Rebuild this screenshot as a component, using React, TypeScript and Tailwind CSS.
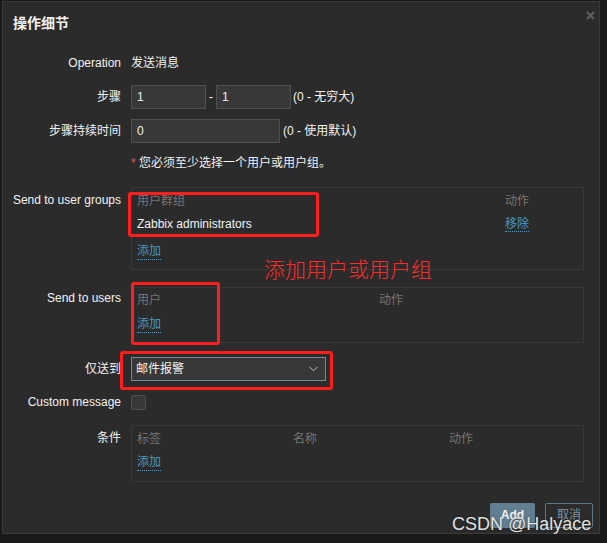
import React from 'react';

const font = "font-['Liberation_Sans','Noto_Sans_CJK_SC',sans-serif]";

const Label = ({ children, top = 0 }: { children: React.ReactNode; top?: number }) => (
  <div
    className="w-[118px] shrink-0 text-right text-[12px] leading-[18px] text-[#f2f2f2]"
    style={{ paddingTop: top }}
  >
    {children}
  </div>
);

const Link = ({ children }: { children: React.ReactNode }) => (
  <span className="text-[12px] leading-[16px] text-[#4796c4] border-b border-dotted border-[#4796c4]">
    {children}
  </span>
);

const App = () => {
  return (
    <div className={`w-[607px] h-[543px] bg-[#1a1a1a] pt-[1px] pl-[2px] ${font}`}>
      <div className="relative w-[598px] h-[533px] bg-[#2b2b2b] border border-[#3a3a3a]">
        {/* close */}
        <svg className="absolute left-[583px] top-[9px]" width="9" height="9" viewBox="0 0 9 9">
          <path d="M1 1 L8 8 M8 1 L1 8" stroke="#5e5e5e" strokeWidth="2.2" />
        </svg>

        <div className="mt-[11px] pl-[10px] h-[20px] text-[14px] leading-[20px] font-bold text-[#f2f2f2]">
          操作细节
        </div>

        {/* Operation */}
        <div className="mt-[17px] flex h-[24px] items-center pt-[1px]">
          <Label>Operation</Label>
          <div className="ml-[10px] text-[12px] leading-[18px] text-[#f2f2f2]">发送消息</div>
        </div>

        {/* 步骤 */}
        <div className="mt-[11px] flex h-[24px] items-center">
          <Label>步骤</Label>
          <div className="ml-[10px] flex items-center text-[12px] text-[#f2f2f2]">
            <div className="w-[75px] h-[24px] bg-[#383838] border border-[#4f4f4f] pl-[5px] leading-[22px]">1</div>
            <span className="w-[10px] text-center">-</span>
            <div className="w-[75px] h-[24px] bg-[#383838] border border-[#4f4f4f] pl-[5px] leading-[22px]">1</div>
            <span className="ml-[2px]">(0 - 无穷大)</span>
          </div>
        </div>

        {/* 步骤持续时间 */}
        <div className="mt-[10px] flex h-[24px] items-center">
          <Label>步骤持续时间</Label>
          <div className="ml-[10px] flex items-center text-[12px] text-[#f2f2f2]">
            <div className="w-[149px] h-[24px] bg-[#383838] border border-[#4f4f4f] pl-[5px] leading-[22px]">0</div>
            <span className="ml-[3px]">(0 - 使用默认)</span>
          </div>
        </div>

        {/* note */}
        <div className="mt-[10px] flex h-[20px] items-center">
          <div className="w-[118px] shrink-0" />
          <div className="ml-[10px] text-[12px] text-[#f2f2f2]">
            <span className="text-[#e45959]">*</span> 您必须至少选择一个用户或用户组。
          </div>
        </div>

        {/* Send to user groups */}
        <div className="mt-[14px] flex">
          <Label top={4}>Send to user groups</Label>
          <div className="ml-[10px] w-[453px] h-[83px] border border-[#383838] pt-[4px] px-[5px] text-[12px]">
            <div className="flex h-[18px] items-center text-[#757575]">
              <div className="w-[368px]">用户群组</div>
              <div>动作</div>
            </div>
            <div className="flex h-[27px] items-center pt-[1px] text-[#f2f2f2]">
              <div className="w-[368px]">Zabbix administrators</div>
              <div><Link>移除</Link></div>
            </div>
            <div className="mt-[4px] flex h-[20px] items-center">
              <Link>添加</Link>
            </div>
          </div>
        </div>

        {/* Send to users */}
        <div className="mt-[17px] flex">
          <Label top={2}>Send to users</Label>
          <div className="ml-[10px] w-[453px] h-[56px] border border-[#383838] pt-[3px] px-[5px] text-[12px]">
            <div className="flex h-[18px] items-center text-[#757575]">
              <div className="w-[242px]">用户</div>
              <div>动作</div>
            </div>
            <div className="mt-[5px] flex h-[20px] items-center">
              <Link>添加</Link>
            </div>
          </div>
        </div>

        {/* 仅送到 */}
        <div className="mt-[14px] flex h-[24px] items-center">
          <Label>仅送到</Label>
          <div className="ml-[10px] flex w-[195px] h-[24px] items-center justify-between bg-[#383838] border border-[#768a96] pl-[4px] pr-[7px] text-[12px] text-[#f2f2f2]">
            <span>邮件报警</span>
            <svg width="9" height="6" viewBox="0 0 9 6">
              <path d="M0.5 0.8 L4.5 4.8 L8.5 0.8" stroke="#c8c8c8" strokeWidth="1" fill="none" />
            </svg>
          </div>
        </div>

        {/* Custom message */}
        <div className="mt-[13px] flex h-[16px] items-center">
          <Label>Custom message</Label>
          <div className="ml-[10px] w-[15px] h-[15px] rounded-[2px] bg-[#383838] border border-[#4f4f4f]" />
        </div>

        {/* 条件 */}
        <div className="mt-[15px] flex">
          <Label top={4}>条件</Label>
          <div className="ml-[10px] w-[453px] h-[57px] border border-[#383838] pt-[4px] px-[5px] text-[12px]">
            <div className="flex h-[18px] items-center text-[#757575]">
              <div className="w-[156px]">标签</div>
              <div className="w-[156px]">名称</div>
              <div>动作</div>
            </div>
            <div className="mt-[4px] flex h-[20px] items-center">
              <Link>添加</Link>
            </div>
          </div>
        </div>

        {/* buttons */}
        <div className="mt-[21px] flex h-[25px] justify-end gap-[10px] pr-[6px] text-[12px]">
          <div className="w-[45px] h-[25px] rounded-[2px] bg-[#627f91] text-center leading-[25px] font-bold text-[#f2f2f2]">
            Add
          </div>
          <div className="w-[48px] h-[25px] rounded-[2px] border border-[#5b7686] text-center leading-[23px] text-[#7b95a5]">
            取消
          </div>
        </div>

        {/* annotations */}
        <div className="absolute left-[125px] top-[190px] w-[191px] h-[45px] rounded-[3px] border-[3px] border-[#ff1d1d]" />
        <div className="absolute left-[128px] top-[280px] w-[89px] h-[63px] rounded-[3px] border-[3px] border-[#ff1d1d]" />
        <div className="absolute left-[117px] top-[349px] w-[213px] h-[39px] rounded-[3px] border-[3px] border-[#ff1d1d]" />
        <div className="absolute left-[261px] top-[256px] text-[21px] leading-[21px] font-light text-[#ff2a2a] font-['Noto_Sans_CJK_SC',sans-serif]">
          添加用户或用户组
        </div>
        <div className="absolute left-[449px] top-[509px] text-[18px] text-[#e2e2e2] [text-shadow:0_0_2px_rgba(0,0,0,0.6)]">
          CSDN @Halyace
        </div>
      </div>
    </div>
  );
};

export default App;
